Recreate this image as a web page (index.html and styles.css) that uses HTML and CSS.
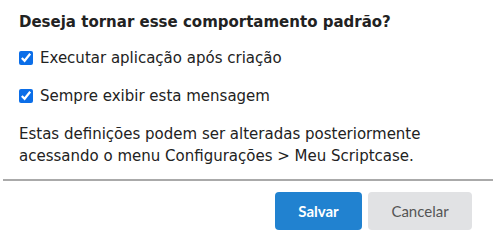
FILE: index.html
```html
<!DOCTYPE html>
<html lang="pt">
<head>
    <meta charset="UTF-8">
    <title>Comportamento padrão</title>
    <link rel="stylesheet" href="styles.css">
</head>
<body>

<div class="dialog">
    <div class="dialog__body">
        <h3 class="dialog__title">Deseja tornar esse comportamento padrão?</h3>

        <label class="option">
            <input type="checkbox" class="option__check" checked>
            <span>Executar aplicação após criação</span>
        </label>
        <label class="option">
            <input type="checkbox" class="option__check" checked>
            <span>Sempre exibir esta mensagem</span>
        </label>

        <p class="dialog__note">Estas definições podem ser alteradas posteriormente acessando o menu Configurações &gt; Meu Scriptcase.</p>
    </div>

    <div class="dialog__footer">
        <button type="button" class="btn btn-primary">Salvar</button>
        <button type="button" class="btn btn-default">Cancelar</button>
    </div>
</div>

</body>
</html>
```

FILE: styles.css
```css
body{
    margin: 0;
    background-color: #fff;
    font-family: "DejaVu Sans", Verdana, sans-serif;
    color: #222;
}
.dialog{
    width: 496px;
    height: 249px;
}
.dialog__body{
    padding: 12px 19px 0;
}
.dialog__title{
    margin: 0 0 15px;
    font-size: 15px;
    line-height: 20px;
    font-weight: bold;
}
.option{
    display: flex;
    align-items: center;
    gap: 7px;
    height: 22px;
    margin-bottom: 16px;
    font-size: 15px;
}
.option__check{
    margin: 0;
    width: 14px;
    height: 14px;
    accent-color: #0b6ee8;
}
.dialog__note{
    margin: 0;
    width: 440px;
    font-size: 15px;
    line-height: 22px;
}
.dialog__footer{
    margin: 12px 3px 0;
    border-top: 2px solid #aaa;
    padding: 11px 21px 0 0;
    display: flex;
    justify-content: flex-end;
    gap: 6px;
}
.btn{
    height: 38px;
    border: none;
    border-radius: 4px;
    font-family: Lato, sans-serif;
    font-size: 15px;
    cursor: pointer;
}
.btn-primary{
    width: 87px;
    background-color: #2182d0;
    color: #fff;
    font-weight: bold;
}
.btn-default{
    width: 104px;
    background-color: #e1e2e4;
    color: #555;
}
```
